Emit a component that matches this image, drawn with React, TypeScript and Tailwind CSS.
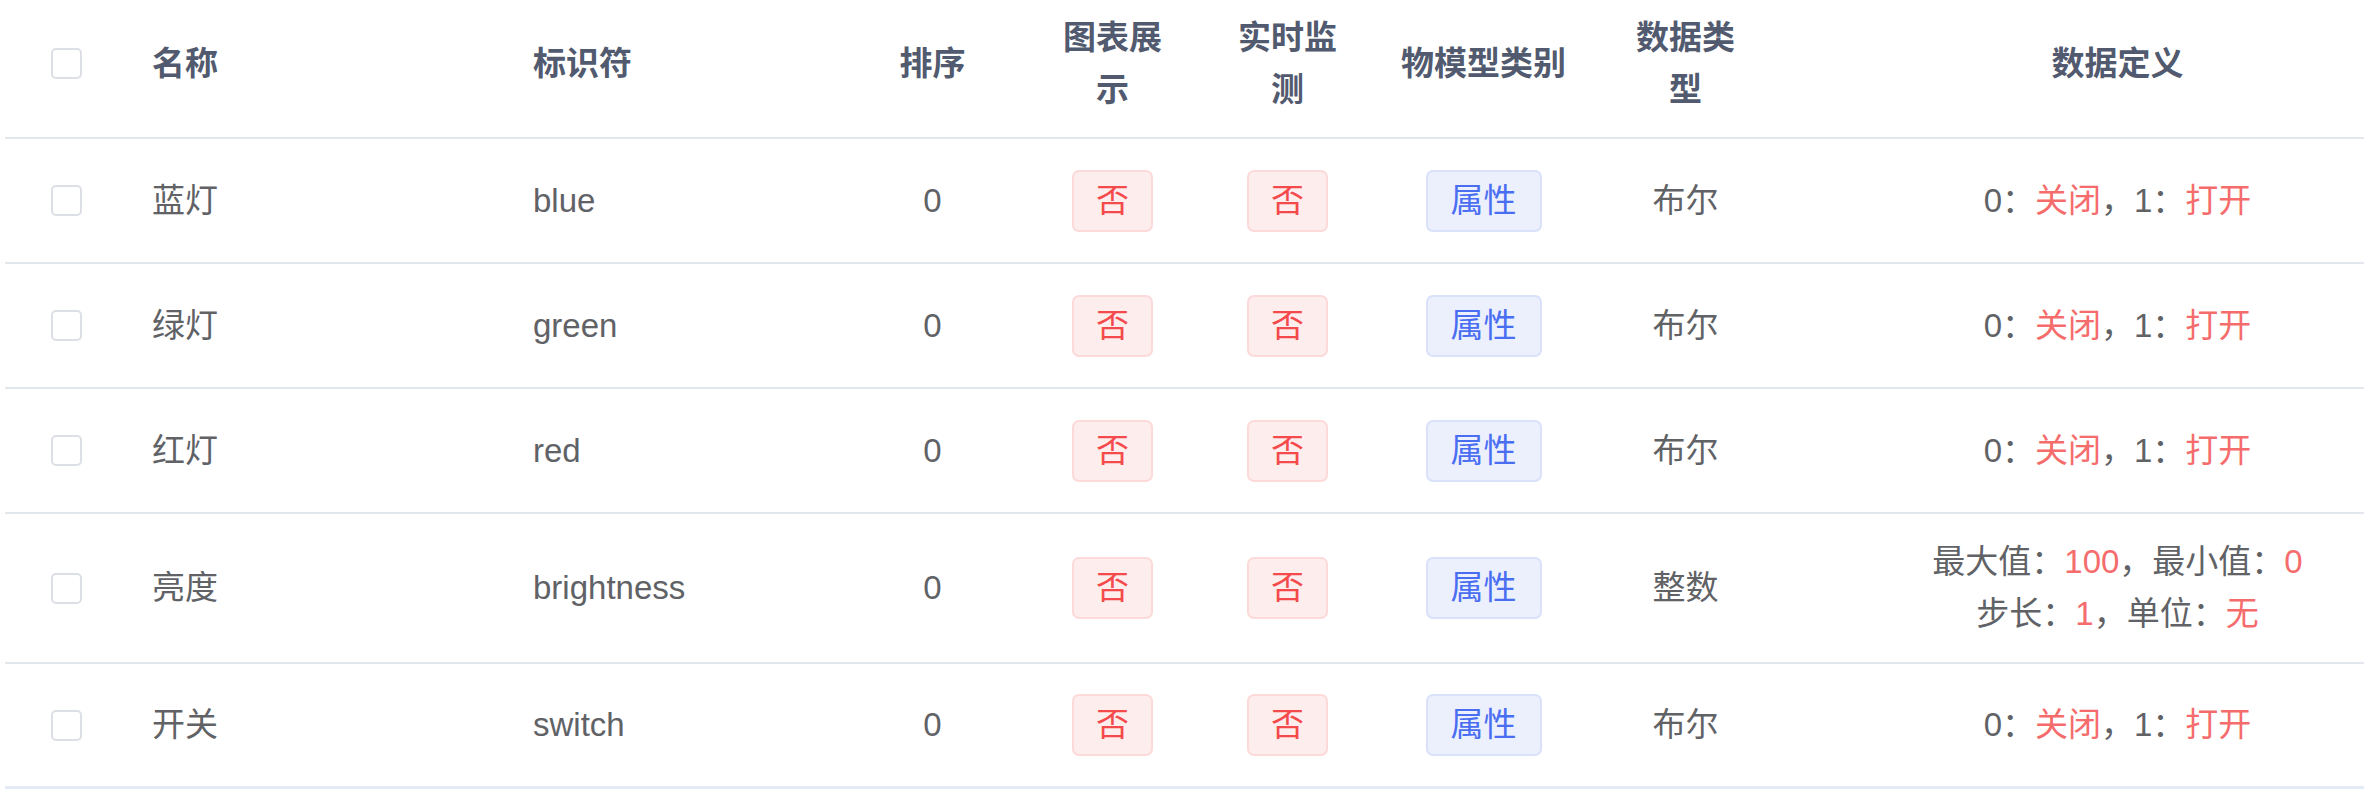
import React from 'react';

type Row = {
  name: string;
  ident: string;
  type: string;
  kind: 'bool' | 'int';
};

const rows: Row[] = [
  { name: '蓝灯', ident: 'blue', type: '布尔', kind: 'bool' },
  { name: '绿灯', ident: 'green', type: '布尔', kind: 'bool' },
  { name: '红灯', ident: 'red', type: '布尔', kind: 'bool' },
  { name: '亮度', ident: 'brightness', type: '整数', kind: 'int' },
  { name: '开关', ident: 'switch', type: '布尔', kind: 'bool' },
];

const cols =
  'grid grid-cols-[122px_381px_332px_185px_175px_175px_217px_187px_677px]';

const Checkbox = () => (
  <span className="block h-[31px] w-[31px] rounded-[5px] border-2 border-[#dcdfe6] bg-white" />
);

const Tag = ({ children, blue }: { children: React.ReactNode; blue?: boolean }) => (
  <span
    className={
      blue
        ? 'inline-flex h-[62px] items-center rounded-[7px] border-2 border-[#d9e1fb] bg-[#ecf0fd] px-[23px] text-[#4a6ef2]'
        : 'inline-flex h-[62px] items-center rounded-[7px] border-2 border-[#fddada] bg-[#feeded] px-[22px] text-[#f54a4c]'
    }
  >
    {children}
  </span>
);

const Red = ({ children }: { children: React.ReactNode }) => (
  <span className="text-[#f56c6c]">{children}</span>
);

const Definition = ({ kind }: { kind: Row['kind'] }) => {
  if (kind === 'int') {
    return (
      <div className="text-center">
        <div>
          最大值：<Red>100</Red>，最小值：<Red>0</Red>
        </div>
        <div>
          步长：<Red>1</Red>，单位：<Red>无</Red>
        </div>
      </div>
    );
  }
  return (
    <div className="text-center">
      0：<Red>关闭</Red>，1：<Red>打开</Red>
    </div>
  );
};

export default function App() {
  return (
    <div className="w-[2364px] h-[802px] overflow-hidden bg-white pl-[5px] font-['Liberation_Sans','Noto_Sans_CJK_SC',sans-serif] text-[33px] leading-[52px] text-[#606266]">
      <div className="w-[2451px]">
        {/* header */}
        <div className={`${cols} h-[139px] border-b-2 border-[#e2e7ee] pb-[10px] font-bold text-[#515a6e]`}>
          <div className="flex items-center justify-center">
            <Checkbox />
          </div>
          <div className="flex items-center pl-[25px]">名称</div>
          <div className="flex items-center pl-[25px]">标识符</div>
          <div className="flex items-center justify-center">排序</div>
          <div className="flex items-center justify-center text-center">
            <span className="max-w-[110px]">图表展示</span>
          </div>
          <div className="flex items-center justify-center text-center">
            <span className="max-w-[110px]">实时监测</span>
          </div>
          <div className="flex items-center justify-center">物模型类别</div>
          <div className="flex items-center justify-center text-center">
            <span className="max-w-[110px]">数据类型</span>
          </div>
          <div className="flex items-center justify-center">数据定义</div>
        </div>

        {rows.map((r, i) => (
          <div
            key={r.ident}
            className={`${cols} ${r.kind === 'int' ? 'h-[150px]' : 'h-[125px]'} ${
              i === rows.length - 1 ? 'border-b-[3px] border-[#e4eaf6]' : 'border-b-2 border-[#e2e7ee]'
            }`}
          >
            <div className="flex items-center justify-center">
              <Checkbox />
            </div>
            <div className="flex items-center pl-[25px]">{r.name}</div>
            <div className="flex items-center pl-[25px]">{r.ident}</div>
            <div className="flex items-center justify-center">0</div>
            <div className="flex items-center justify-center">
              <Tag>否</Tag>
            </div>
            <div className="flex items-center justify-center">
              <Tag>否</Tag>
            </div>
            <div className="flex items-center justify-center">
              <Tag blue>属性</Tag>
            </div>
            <div className="flex items-center justify-center">{r.type}</div>
            <div className="flex items-center justify-center">
              <Definition kind={r.kind} />
            </div>
          </div>
        ))}
      </div>
    </div>
  );
}
